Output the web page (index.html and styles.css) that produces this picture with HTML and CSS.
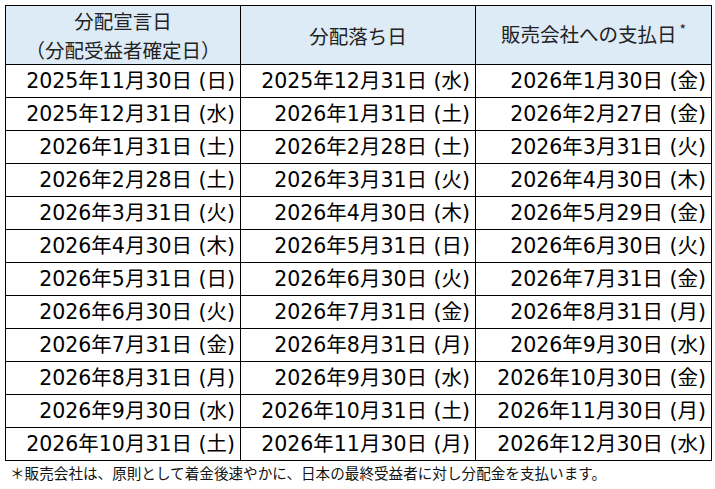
FILE: index.html
```html
<!DOCTYPE html>
<html lang="ja">
<head>
<meta charset="utf-8">
<title>分配スケジュール</title>
<link rel="stylesheet" href="styles.css">
</head>
<body>
<table class="schedule">
  <colgroup>
    <col class="c1"><col class="c2"><col class="c3">
  </colgroup>
  <thead>
    <tr>
      <th>分配宣言日<br>（分配受益者確定日）</th>
      <th>分配落ち日</th>
      <th>販売会社への支払日<sup class="mark">*</sup></th>
    </tr>
  </thead>
  <tbody>
    <tr><td>2025年11月30日 (日)</td><td>2025年12月31日 (水)</td><td>2026年1月30日 (金)</td></tr>
    <tr><td>2025年12月31日 (水)</td><td>2026年1月31日 (土)</td><td>2026年2月27日 (金)</td></tr>
    <tr><td>2026年1月31日 (土)</td><td>2026年2月28日 (土)</td><td>2026年3月31日 (火)</td></tr>
    <tr><td>2026年2月28日 (土)</td><td>2026年3月31日 (火)</td><td>2026年4月30日 (木)</td></tr>
    <tr><td>2026年3月31日 (火)</td><td>2026年4月30日 (木)</td><td>2026年5月29日 (金)</td></tr>
    <tr><td>2026年4月30日 (木)</td><td>2026年5月31日 (日)</td><td>2026年6月30日 (火)</td></tr>
    <tr><td>2026年5月31日 (日)</td><td>2026年6月30日 (火)</td><td>2026年7月31日 (金)</td></tr>
    <tr><td>2026年6月30日 (火)</td><td>2026年7月31日 (金)</td><td>2026年8月31日 (月)</td></tr>
    <tr><td>2026年7月31日 (金)</td><td>2026年8月31日 (月)</td><td>2026年9月30日 (水)</td></tr>
    <tr><td>2026年8月31日 (月)</td><td>2026年9月30日 (水)</td><td>2026年10月30日 (金)</td></tr>
    <tr><td>2026年9月30日 (水)</td><td>2026年10月31日 (土)</td><td>2026年11月30日 (月)</td></tr>
    <tr><td>2026年10月31日 (土)</td><td>2026年11月30日 (月)</td><td>2026年12月30日 (水)</td></tr>
  </tbody>
</table>
<p class="note">＊販売会社は、原則として着金後速やかに、日本の最終受益者に対し分配金を支払います。</p>
</body>
</html>
```

FILE: styles.css
```css
html, body {
  margin: 0;
  background: #ffffff;
}
body {
  padding: 5px;
  font-family: "Noto Sans CJK JP", sans-serif;
  color: #000;
}
.schedule {
  border-collapse: collapse;
  table-layout: fixed;
  width: 706px;
}
.c1 { width: 235px; }
.c2 { width: 235px; }
.c3 { width: 236px; }
.schedule th,
.schedule td {
  border: 1px solid #000;
}
.schedule th {
  background: #ddebf7;
  color: #222;
  font-weight: normal;
  font-family: "Noto Sans CJK JP", sans-serif;
  font-size: 19.5px;
  line-height: 29px;
  height: 56px;
  padding: 0;
  text-align: center;
  vertical-align: middle;
}
.mark {
  font-size: 14px;
  vertical-align: 0;
  position: relative;
  top: -7px;
  margin-left: 3px;
}
.schedule td {
  font-family: "DejaVu Sans", "Noto Sans CJK JP", sans-serif;
  font-size: 20.5px;
  line-height: 1;
  height: 32px;
  padding: 0 5px 0 0;
  text-align: right;
  vertical-align: middle;
  white-space: nowrap;
}
.note {
  margin: 2px 0 0 5px;
  font-size: 14.6px;
  line-height: 20px;
  color: #111;
}
```
